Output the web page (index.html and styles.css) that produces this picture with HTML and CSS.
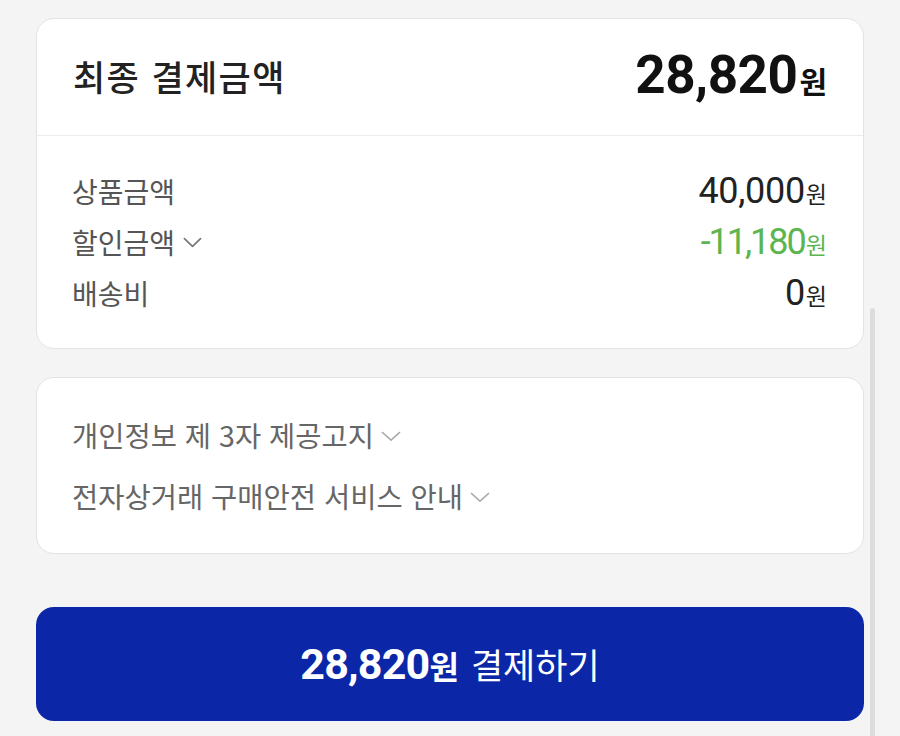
FILE: index.html
```html
<!DOCTYPE html>
<html lang="ko">
<head>
<meta charset="utf-8">
<link rel="stylesheet" href="styles.css">
</head>
<body>
<main class="page">
  <section class="card summary">
    <div class="summary-head">
      <h2 class="summary-title">최종 결제금액</h2>
      <div class="total"><span class="total-num">28,820</span><span class="total-won">원</span></div>
    </div>
    <div class="summary-body">
      <div class="row">
        <span class="label">상품금액</span>
        <span class="value"><span class="num">40,000</span><span class="won">원</span></span>
      </div>
      <div class="row">
        <span class="label">할인금액
          <svg class="chev chev-dark" viewBox="0 0 20 11" width="19" height="11"><path d="M1.5 1.5 L10 9.5 L18.5 1.5" fill="none" stroke="currentColor" stroke-width="1.8" stroke-linecap="round" stroke-linejoin="round"/></svg>
        </span>
        <span class="value discount"><span class="num">-11,180</span><span class="won">원</span></span>
      </div>
      <div class="row">
        <span class="label">배송비</span>
        <span class="value"><span class="num">0</span><span class="won">원</span></span>
      </div>
    </div>
  </section>

  <section class="card notices">
    <div class="notice">개인정보 제 3자 제공고지
      <svg class="chev chev-light" viewBox="0 0 22 12" width="20" height="11"><path d="M1.5 1.5 L11 10 L20.5 1.5" fill="none" stroke="currentColor" stroke-width="1.6" stroke-linecap="round" stroke-linejoin="round"/></svg>
    </div>
    <div class="notice">전자상거래 구매안전 서비스 안내
      <svg class="chev chev-light" viewBox="0 0 22 12" width="20" height="11"><path d="M1.5 1.5 L11 10 L20.5 1.5" fill="none" stroke="currentColor" stroke-width="1.6" stroke-linecap="round" stroke-linejoin="round"/></svg>
    </div>
  </section>

  <button class="pay-btn" type="button"><span class="pay-inner"><span class="pay-num">28,820</span><span class="pay-won">원</span><span class="pay-text">결제하기</span></span></button>
</main>
<div class="scrollbar"></div>
</body>
</html>
```
FILE: styles.css
```css
* { box-sizing: border-box; }
html, body { margin: 0; padding: 0; }
body {
  background: #f4f4f4;
  font-family: "Noto Sans CJK KR", "Noto Sans", sans-serif;
  width: 900px;
  height: 736px;
  overflow: hidden;
  position: relative;
}
.page {
  padding: 18px 36px 0;
  display: flex;
  flex-direction: column;
}
.card {
  background: #fff;
  border: 1px solid #e3e3e3;
  border-radius: 18px;
}
.summary-head {
  height: 117px;
  display: flex;
  align-items: center;
  justify-content: space-between;
  padding: 0 36px 4px 36px;
  border-bottom: 1px solid #ececec;
}
.summary-title {
  margin: 0;
  font-size: 35px;
  font-weight: 500;
  color: #222;
  letter-spacing: 1.4px;
}
.total {
  display: flex;
  align-items: baseline;
  color: #111;
}
.total-num {
  font-family: Roboto, "Liberation Sans", sans-serif;
  font-weight: 700;
  font-size: 53px;
  letter-spacing: -0.5px;
}
.total-won {
  font-size: 30px;
  font-weight: 700;
  margin-left: 2px;
}
.summary-body {
  padding: 29px 36px 30px 35px;
  display: flex;
  flex-direction: column;
}
.row {
  height: 51px;
  display: flex;
  align-items: center;
  justify-content: space-between;
}
.label {
  font-size: 28px;
  color: #555;
  display: flex;
  align-items: center;
}
.chev { display: block; }
.chev-dark { color: #777; margin-left: 8px; margin-top: 2px; }
.chev-light { color: #aaa; margin-left: 7px; margin-top: 3px; }
.value {
  display: flex;
  align-items: baseline;
  color: #222;
}
.value .num {
  font-family: Roboto, "Liberation Sans", sans-serif;
  font-size: 36px;
  letter-spacing: -0.3px;
}
.value .won {
  font-size: 23px;
  margin-left: 1px;
}
.value.discount { color: #5cb54f; }
.value.discount .num { letter-spacing: -2px; }

.notices {
  margin-top: 28px;
  padding: 26px 36px 27px 35px;
  display: flex;
  flex-direction: column;
}
.notice {
  height: 61px;
  display: flex;
  align-items: center;
  font-size: 28.5px;
  color: #666;
}

.pay-btn {
  margin-top: 53px;
  height: 114px;
  width: 100%;
  border: none;
  border-radius: 18px;
  background: #0b27a8;
  color: #fff;
  display: flex;
  align-items: center;
  justify-content: center;
  padding: 0 0 2px;
  font-family: "Noto Sans CJK KR", sans-serif;
}
.pay-inner {
  display: flex;
  align-items: baseline;
}
.pay-num {
  font-family: Roboto, "Liberation Sans", sans-serif;
  font-weight: 700;
  font-size: 43px;
  letter-spacing: -0.8px;
}
.pay-won {
  font-size: 32px;
  font-weight: 700;
}
.pay-text {
  font-size: 35px;
  margin-left: 12px;
}
.scrollbar {
  position: absolute;
  left: 870px;
  top: 308px;
  width: 5px;
  height: 440px;
  background: #dddddd;
  border-radius: 3px;
}
```
